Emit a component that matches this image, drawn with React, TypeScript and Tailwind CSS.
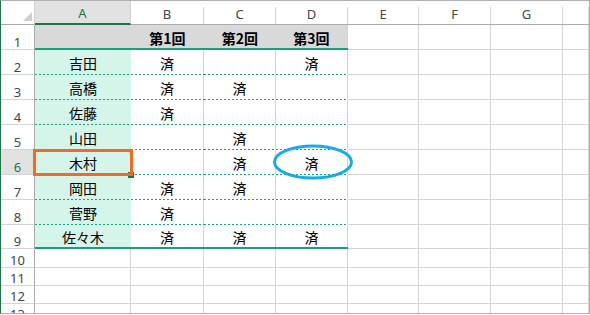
import React from "react";
import { clsx } from "clsx";

// column widths (A..H), each includes its right gridline
const COL_W = ["w-[96px]", "w-[73px]", "w-[72px]", "w-[72px]", "w-[71px]", "w-[72px]", "w-[72px]", "w-[26px]"];
const LETTERS = ["A", "B", "C", "D", "E", "F", "G", ""];
const HEADS = ["", "第1回", "第2回", "第3回"];

const ROWS: Array<[string, string, string, string]> = [
  ["吉田", "済", "", "済"],
  ["高橋", "済", "済", ""],
  ["佐藤", "済", "", ""],
  ["山田", "", "済", ""],
  ["木村", "", "済", "済"],
  ["岡田", "済", "済", ""],
  ["菅野", "済", "", ""],
  ["佐々木", "済", "済", "済"],
];

const EXTRA = [
  { n: 10, h: "h-[19px]" },
  { n: 11, h: "h-[18px]" },
  { n: 12, h: "h-[18px]" },
  { n: 13, h: "h-[18px]" },
];

function RowHeader({ n, active }: { n: number; active?: boolean }) {
  return (
    <div
      className={clsx(
        "w-[34px] shrink-0 flex items-end justify-center border-r border-b border-r-[#ababab] border-b-[#d4d4d4]",
        "font-['Noto_Sans',sans-serif] text-[13px] leading-none",
        active ? "bg-[#e1e1e1] text-[#217346]" : "text-[#444]"
      )}
    >
      {n}
    </div>
  );
}

function GridCell({ w }: { w: string }) {
  return <div className={clsx(w, "shrink-0 border-r border-b border-[#d4d4d4]")} />;
}

function TableCell({
  w,
  text,
  bg,
  grid,
  bottom,
  bold,
}: {
  w: string;
  text: string;
  bg?: string;
  grid?: boolean;
  bottom: "dotted" | "solid";
  bold?: boolean;
}) {
  return (
    <div className={clsx(w, "shrink-0 flex flex-col", bg)}>
      <div className="flex flex-1">
        <div
          className={clsx(
            "flex-1 flex items-center justify-center pt-[2px] text-[14px] leading-none text-black",
            bold && "font-bold"
          )}
        >
          {text}
        </div>
        {grid && <div className="w-px bg-[#d4d4d4]" />}
      </div>
      {bottom === "solid" ? (
        <div className="h-[2px] bg-[#1f9d7a]" />
      ) : (
        <div className="h-px bg-[repeating-linear-gradient(90deg,#1f9d7a_0_2px,transparent_2px_4px)]" />
      )}
    </div>
  );
}

export default function App() {
  return (
    <div className="relative w-[590px] h-[314px] overflow-hidden bg-white border border-[#b0b0b0] border-l-[#217346] font-['Noto_Sans_CJK_JP',sans-serif]">
      {/* column headers */}
      <div className="flex h-[24px]">
        <div className="w-[34px] shrink-0 flex items-end justify-end pr-[2px] pb-[3px] border-r border-b border-r-[#d0d0d0] border-b-[#ababab]">
          <svg width="9" height="9" viewBox="0 0 9 9">
            <polygon points="9,0 9,9 0,9" fill="#cfcfcf" />
          </svg>
        </div>
        {LETTERS.map((l, i) =>
          i === 0 ? (
            <div
              key={i}
              className={clsx(
                COL_W[i],
                "shrink-0 flex items-center justify-center pt-[3px] bg-[#e1e1e1] border-b-2 border-r border-b-[#217346] border-r-[#d4d4d4]",
                "font-['Noto_Sans',sans-serif] text-[13px] leading-none text-[#217346]"
              )}
            >
              {l}
            </div>
          ) : (
            <div key={i} className={clsx(COL_W[i], "shrink-0 flex border-b border-[#ababab]")}>
              <div className="flex-1 flex items-center justify-center pt-[3px] font-['Noto_Sans',sans-serif] text-[13px] leading-none text-[#444]">
                {l}
              </div>
              <div className="w-px h-[17px] self-end bg-[#d8d8d8]" />
            </div>
          )
        )}
      </div>

      {/* row 1: table heading */}
      <div className="flex h-[25px]">
        <RowHeader n={1} />
        {HEADS.map((t, i) => (
          <TableCell key={i} w={COL_W[i]} text={t} bg="bg-[#d9d9d9]" bottom="solid" bold grid={i === 3} />
        ))}
        {COL_W.slice(4).map((w, i) => (
          <GridCell key={i} w={w} />
        ))}
      </div>

      {/* rows 2-9 */}
      {ROWS.map((r, ri) => {
        const last = ri === ROWS.length - 1;
        return (
          <div key={ri} className={clsx("flex", last ? "h-[24px]" : "h-[25px]")}>
            <RowHeader n={ri + 2} active={ri + 2 === 6} />
            {r.map((t, ci) => (
              <TableCell
                key={ci}
                w={COL_W[ci]}
                text={t}
                bg={ci === 0 ? "bg-[#d5f5ea]" : undefined}
                grid={ci !== 0}
                bottom={last ? "solid" : "dotted"}
              />
            ))}
            {COL_W.slice(4).map((w, i) => (
              <GridCell key={i} w={w} />
            ))}
          </div>
        );
      })}

      {/* empty rows */}
      {EXTRA.map((row) => (
        <div key={row.n} className={clsx("flex", row.h)}>
          <RowHeader n={row.n} />
          {COL_W.map((w, i) => (
            <GridCell key={i} w={w} />
          ))}
        </div>
      ))}

      {/* fill handle + highlight box on A6 */}
      <div className="absolute left-[127px] top-[171px] w-[6px] h-[6px] bg-[#217346]" />
      <div className="absolute left-[32px] top-[148px] w-[100px] h-[27px] border-[3px] border-[#f26b21]" />

      {/* circle around D6 */}
      <svg className="absolute left-[271px] top-[143px]" width="82" height="36" viewBox="0 0 82 36">
        <ellipse cx="41" cy="18" rx="38.5" ry="16" fill="none" stroke="#17abe8" strokeWidth="3" />
      </svg>
    </div>
  );
}
